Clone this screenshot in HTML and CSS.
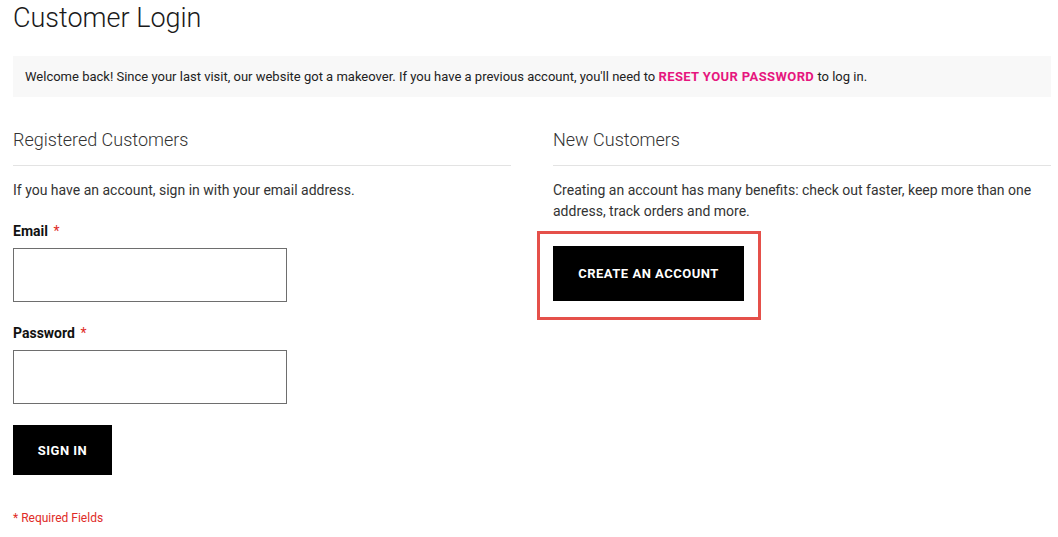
FILE: index.html
```html
<!DOCTYPE html>
<html lang="en">
<head>
<meta charset="utf-8">
<title>Customer Login</title>
<link rel="stylesheet" href="styles.css">
</head>
<body>
<div class="page">
  <h1 class="page-title">Customer Login</h1>
  <div class="notice">Welcome back! Since your last visit, our website got a makeover. If you have a previous account, you'll need to <a class="notice-link" href="#">RESET YOUR PASSWORD</a> to log in.</div>
  <div class="columns">
    <section class="col">
      <h2 class="col-title">Registered Customers</h2>
      <p class="col-text">If you have an account, sign in with your email address.</p>
      <label class="field-label">Email <span class="req">*</span></label>
      <input class="field-input" type="email">
      <label class="field-label field-label-2">Password <span class="req">*</span></label>
      <input class="field-input" type="password">
      <button class="btn btn-signin">SIGN IN</button>
      <div class="required-note">* Required Fields</div>
    </section>
    <section class="col">
      <h2 class="col-title">New Customers</h2>
      <p class="col-text">Creating an account has many benefits: check out faster, keep more than one address, track orders and more.</p>
      <div class="create-wrap">
        <button class="btn btn-create">CREATE AN ACCOUNT</button>
      </div>
    </section>
  </div>
</div>
</body>
</html>
```
FILE: styles.css
```css
* { box-sizing: border-box; }
body {
  margin: 0;
  font-family: Roboto, "Liberation Sans", sans-serif;
  color: #333;
  background: #fff;
}
.page {
  padding: 0 7px 0 13px;
}
.page-title {
  margin: 0;
  font-size: 27px;
  font-weight: 300;
  line-height: 36px;
  color: #1a1a1a;
}
.notice {
  margin-top: 20px;
  background: #f8f8f8;
  padding: 10px 12px;
  font-size: 13px;
  line-height: 21px;
  color: #222;
}
.notice-link {
  color: #e6167e;
  font-weight: 700;
  letter-spacing: 0.4px;
  text-decoration: none;
}
.columns {
  display: grid;
  grid-template-columns: 498px 498px;
  column-gap: 42px;
}
.col {
  display: flex;
  flex-direction: column;
  align-items: flex-start;
}
.col-title {
  align-self: stretch;
  margin: 31px 0 0;
  padding-bottom: 13px;
  border-bottom: 1px solid #e3e3e3;
  font-size: 18px;
  font-weight: 300;
  line-height: 24px;
  color: #333;
}
.col-text {
  margin: 14px 0 0;
  font-size: 14px;
  line-height: 21px;
  color: #333;
}
.field-label {
  margin-top: 20px;
  font-size: 14px;
  font-weight: 700;
  line-height: 21px;
  color: #111;
}
.field-label-2 { margin-top: 21px; }
.req {
  color: #e02b27;
  font-weight: 400;
  margin-left: 2px;
}
.field-input {
  margin-top: 6px;
  width: 274px;
  height: 54px;
  border: 1px solid #6e6e6e;
  border-radius: 0;
  background: #fff;
}
.btn {
  border: 0;
  background: #000;
  color: #fff;
  font-family: Roboto, "Liberation Sans", sans-serif;
  font-weight: 700;
  font-size: 13px;
  letter-spacing: 0.5px;
  cursor: pointer;
}
.btn-signin {
  margin-top: 21px;
  width: 99px;
  height: 50px;
  padding: 0;
}
.required-note {
  margin-top: 34px;
  font-size: 12px;
  line-height: 18px;
  color: #e02b27;
}
.create-wrap {
  position: relative;
  margin-top: 24px;
}
.create-wrap::after {
  content: "";
  position: absolute;
  top: -15px;
  left: -16px;
  right: -17px;
  bottom: -19px;
  border: 3px solid #e5504a;
  pointer-events: none;
}
.btn-create {
  display: block;
  width: 191px;
  height: 55px;
  padding: 0;
}
```
